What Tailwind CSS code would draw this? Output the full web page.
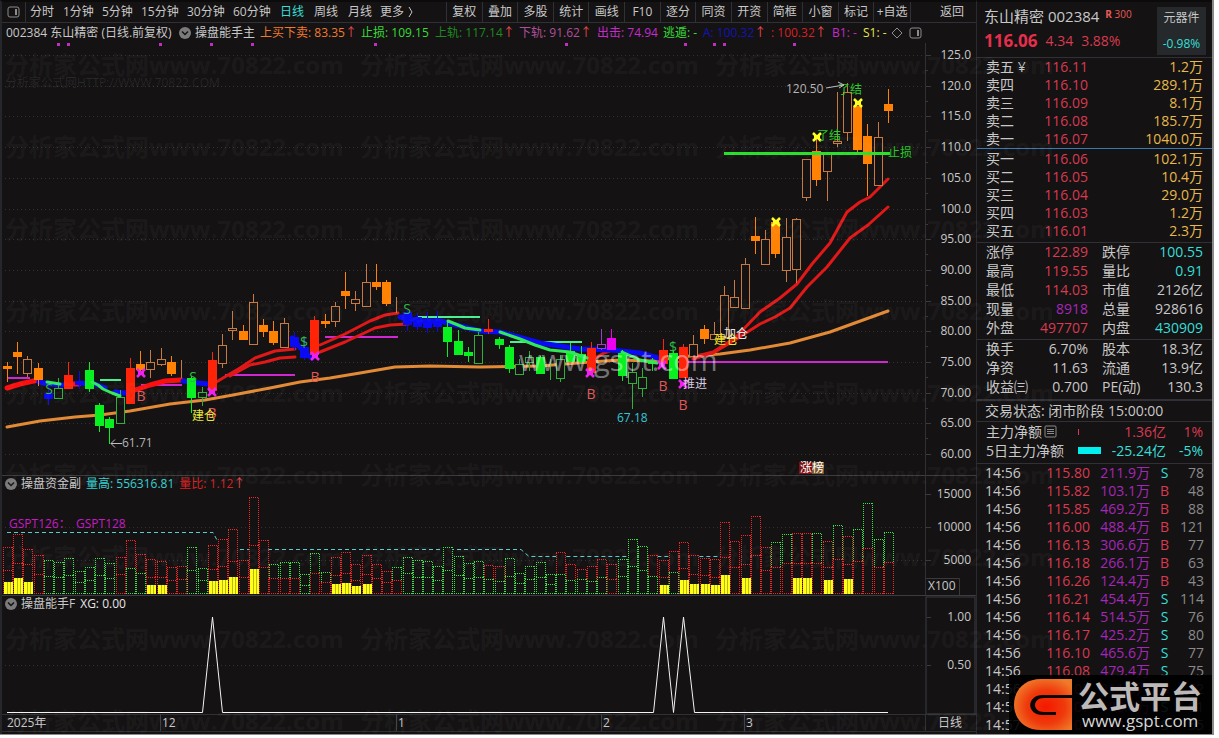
<!DOCTYPE html>
<html lang="zh-CN">
<head>
<meta charset="utf-8">
<meta name="viewport" content="width=device-width, initial-scale=1">
<title>东山精密 002384</title>
<script src="https://cdn.jsdelivr.net/npm/@tailwindcss/browser@4"></script>
</head>
<body class="bg-white font-['Open_Sans','Noto_Sans_CJK_SC',sans-serif] text-xs text-[#c8c8c8]">
<div class="relative mr-[5px] flex overflow-hidden border-r-2 border-b border-[#8a8a8a] bg-[#141213]">

  <main class="min-w-0 flex-1 border-t-2 border-l-2 border-t-[#0c0b0c] border-l-[#26272b]">
    <nav class="flex h-[21px] items-stretch overflow-hidden border-b border-[#303136] whitespace-nowrap" aria-label="周期">
      <button class="flex w-6 shrink-0 items-center justify-center border-r border-[#303136]" aria-label="侧栏">
        <svg width="13" height="12" viewBox="0 0 13 12" fill="none" stroke="#8c8c8c"><rect x="1" y="1" width="11" height="10" rx="2"/><path d="M8 3h2v6H8z" fill="#8c8c8c" stroke="none"/></svg>
      </button>
      <div class="flex flex-1 items-center pl-1">
        <button class="w-[33px] text-left">分时</button>
        <button class="w-[39px] text-left">1分钟</button>
        <button class="w-[39px] text-left">5分钟</button>
        <button class="w-[46px] text-left">15分钟</button>
        <button class="w-[46px] text-left">30分钟</button>
        <button class="w-[47px] text-left">60分钟</button>
        <button class="w-[34px] text-left text-[#35dfd8]">日线</button>
        <button class="w-[34px] text-left">周线</button>
        <button class="w-[32px] text-left">月线</button>
        <button class="flex items-center gap-1 text-left">更多 <svg width="6" height="12" viewBox="0 0 6 12" fill="none" stroke="#c8c8c8"><path d="M1 1l3 5-3 5"/></svg></button>
      </div>
      <div class="grid w-[465px] shrink-0 grid-cols-13 divide-x divide-[#303136] border-x border-[#303136]">
        <button>复权</button><button>叠加</button><button>多股</button><button>统计</button><button>画线</button><button>F10</button><button>逐分</button><button>同资</button><button>开资</button><button>简框</button><button>小窗</button><button>标记</button><button>+自选</button>
      </div>
      <button class="w-[65px] shrink-0 pr-3 text-right">返回</button>
    </nav>

    <div class="flex h-5 items-center overflow-hidden whitespace-nowrap">
      <span class="w-[172px] shrink-0 pl-1">002384 东山精密 (日线.前复权)</span>
      <button class="flex shrink-0 items-center gap-1 pl-[5px]"><svg width="12" height="12" viewBox="0 0 12 12"><circle cx="6" cy="6" r="6" fill="#7b7b7b"/><path d="M3 4.500l3 3 3-3" fill="none" stroke="#141213" stroke-width="1.500"/></svg>操盘能手主</button>
      <span class="ml-[5px] w-[101px] shrink-0 text-[#f07a2c]">上买下卖: 83.35<span class="text-[#ee4a4a]">↑</span></span>
      <span class="w-[74px] shrink-0 text-[#37dc37]">止损: 109.15</span>
      <span class="w-[84px] shrink-0 text-[#1f8a22]">上轨: 117.14<span class="text-[#ee4a4a]">↑</span></span>
      <span class="w-[78px] shrink-0 text-[#b0509a]">下轨: 91.62<span class="text-[#ee4a4a]">↑</span></span>
      <span class="w-[66px] shrink-0 text-[#c52bc9]">出击: 74.94</span>
      <span class="w-10 shrink-0 text-[#37dc37]">逃遁: -</span>
      <span class="w-[68px] shrink-0 text-[#1414b4]">A: 100.32<span class="text-[#ee4a4a]">↑</span></span>
      <span class="w-[61px] shrink-0 text-[#d92020]">: 100.32<span class="text-[#ee4a4a]">↑</span></span>
      <span class="w-[31px] shrink-0 text-[#c52bc9]">B1: -</span>
      <span class="w-[28px] shrink-0 text-[#e6e650]">S1: -</span>
      <svg class="shrink-0" width="32" height="12" viewBox="0 0 32 12" fill="none" stroke="#8c8c8c"><path d="M6 1l5 5-5 5-5-5z"/><rect x="19" y="1" width="11" height="10" rx="2"/><path d="M26 3h2v6h-2z" fill="#8c8c8c" stroke="none"/></svg>
    </div>
    <svg id="price" class="block h-auto w-full" viewBox="2 43 974 432" role="img" aria-label="日线K线图"></svg>

    <div class="flex h-[17px] items-center gap-[5px] border-t border-[#3c3c40] pl-[3px] whitespace-nowrap">
      <svg width="12" height="12" viewBox="0 0 12 12"><circle cx="6" cy="6" r="6" fill="#7b7b7b"/><path d="M3 4.500l3 3 3-3" fill="none" stroke="#141213" stroke-width="1.500"/></svg>
      <span class="-ml-px">操盘资金副</span><span class="text-[#35d0d0]">量高: 556316.81</span><span class="text-[#d92020]">量比: 1.12<span class="text-[#ee4a4a]">↑</span></span>
    </div>
    <svg id="volume" class="block h-auto w-full overflow-visible" viewBox="2 492 974 103" role="img" aria-label="成交量"></svg>

    <div class="flex h-[17px] items-center gap-[5px] border-t border-[#3c3c40] pl-[3px] whitespace-nowrap">
      <svg width="12" height="12" viewBox="0 0 12 12"><circle cx="6" cy="6" r="6" fill="#7b7b7b"/><path d="M3 4.500l3 3 3-3" fill="none" stroke="#141213" stroke-width="1.500"/></svg>
      <span class="-ml-px">操盘能手F</span><span class="text-[#e6e6e6]">XG: 0.00</span>
    </div>
    <svg id="signal" class="block h-auto w-full overflow-visible" viewBox="2 612 974 122" role="img" aria-label="选股信号"></svg>
  </main>

  <aside class="w-[236px] shrink-0 border-t-2 border-l border-t-[#0c0b0c] border-l-[#2b2b2f] text-sm leading-[18px]">
    <header class="flex h-14 justify-between border-b border-[#303136] pr-[6px] pl-[7px] whitespace-nowrap">
      <div>
        <h1 class="mt-[5px] flex items-start gap-[6px] text-[15px] leading-[18px]"><span>东山精密 002384</span><span class="text-[10px] leading-[14px] text-[#e85a55]"><b>R</b> 300</span></h1>
        <p class="mt-[7px] flex items-center gap-2 text-[#d83a50]"><b class="text-[17px] text-[#e62f4c]">116.06</b><span>4.34</span><span>3.88%</span></p>
      </div>
      <div class="mt-[5px] flex h-12 w-[49px] flex-col items-center justify-between bg-[#25292b] py-[3px] text-xs"><span>元器件</span><span class="text-[#35dfd8]">-0.98%</span></div>
    </header>
    <table class="w-full table-fixed border-b border-[#3a78b4] whitespace-nowrap"><tbody id="asks"></tbody></table>
    <table class="mt-px w-full table-fixed whitespace-nowrap"><tbody id="bids"></tbody></table>
    <table class="mt-[2px] w-full table-fixed border-t border-[#303136] whitespace-nowrap"><tbody id="stats"></tbody></table>
    <table class="mt-px w-full table-fixed border-t border-[#303136] whitespace-nowrap"><tbody id="funda"></tbody></table>
    <p class="mt-[3px] border-t-2 border-b border-[#303136] pl-2 leading-5">交易状态: 闭市阶段 15:00:00</p>
    <table class="mb-[3px] w-full table-fixed whitespace-nowrap">
      <tbody>
        <tr class="h-[19px]"><th class="w-[99px] p-0 pl-[9px] text-left font-normal" scope="row"><span class="flex items-center gap-[2px]">主力净额<svg width="13" height="13" viewBox="0 0 13 13" fill="none" stroke="#8c8c8c"><rect x="1" y="1" width="11" height="11" rx="1"/><path d="M3 4.500h7M3 6.500h7M3 8.500h7"/></svg></span></th><td class="w-[26px] p-0"><span class="ml-[2px] block h-[6px] w-px bg-[#d83a50]"></span></td><td class="w-[64px] p-0 text-right text-[#d83a50]">1.36亿</td><td class="p-0 pr-[9px] text-right text-[#d83a50]">1%</td></tr>
        <tr class="h-[19px]"><th class="p-0 pl-[9px] text-left font-normal" scope="row">5日主力净额</th><td class="p-0"><span class="ml-[2px] block h-[7px] w-[23px] bg-[#00f0f0]"></span></td><td class="p-0 text-right text-[#35dfd8]">-25.24亿</td><td class="p-0 pr-[9px] text-right text-[#35dfd8]">-5%</td></tr>
      </tbody>
    </table>
    <table class="w-full table-fixed border-t border-[#303136] whitespace-nowrap"><tbody id="ticks"></tbody></table>
  </aside>

  <svg id="marks" class="pointer-events-none absolute inset-0 h-full w-full" aria-hidden="true"></svg>

  <div class="absolute right-0 bottom-0 flex h-[59px] w-[203px] items-center gap-[6px] bg-black/90 pl-[5px]">
    <svg class="shrink-0" width="58" height="52" viewBox="0 0 58 52">
      <defs><radialGradient id="flame" cx=".55" cy=".55" r=".6"><stop offset="0" stop-color="#f41800"/><stop offset=".55" stop-color="#ef3a0c"/><stop offset="1" stop-color="#f07a2a"/></radialGradient></defs>
      <path d="M58 0v51H27C-9 51-9 0 27 0z" fill="url(#flame)"/>
      <path d="M58 16H29C12 16 12 36 29 36h13v-3H30c-12 0-12-14 0-14h28z" fill="#0a0606"/>
    </svg>
    <div class="whitespace-nowrap text-[#bdb9b9]"><b class="block text-[31px] leading-[32px]">公式平台</b><span class="block pl-1 text-[17px] leading-[18px] text-[#d6d6d6]">www.gspt.com</span></div>
  </div>
</div>

<script>
const $ = id => document.getElementById(id);
const X = i => Math.round(7 + 10.244 * i) + 0.5;
const line = (x1, y1, x2, y2, c, w = 1, extra = '') => `<line x1="${x1}" y1="${y1}" x2="${x2}" y2="${y2}" stroke="${c}" stroke-width="${w}" ${extra}/>`;
const text = (x, y, s, c, size = 12, extra = '') => `<text x="${x}" y="${y + Math.round(size * 0.36)}" fill="${c}" font-size="${size}" ${extra}>${s}</text>`;
const poly = (pts, c, w = 3) => `<polyline points="${pts}" fill="none" stroke="${c}" stroke-width="${w}" stroke-linejoin="round" stroke-linecap="round"/>`;
const dots = y => line(5, y + .5, 923, y + .5, '#333134', 1, 'stroke-dasharray="1 3"');

/* price chart: [kind, high, body top, body bottom, low] */
const K = {o:['#ff8205',1],h:['#c67a42',0],g:['#08f020',1],G:['#2fb03a',0],r:['#ff2408',1],b:['#0a0af5',1],m:['#f000f0',1],p:['#9a40c0',0]};
const candles = [
['o',362,366,369,382],['o',342,352,357,374],['h',356,359,373,377],['o',363,368,380,386],['b',380,393,399,405],['G',378,388,398,398],['r',362,375,389,389],['b',371,381,385,389],['g',362,370,389,392],['g',403,405,426,432],
['g',417,419,428,444],['G',390,397,423,423],['r',358,368,404,404],['o',351,364,370,374],['h',350,362,369,378],['h',348,359,364,366],['o',356,362,374,376],['h',360,377,377,378],['g',376,378,398,413],['G',387,392,397,406],
['r',352,360,391,391],['h',334,345,363,368],['h',311,328,330,340],['o',325,331,340,340],['h',294,302,344,344],['o',319,325,332,337],['o',321,331,343,345],['h',318,323,347,347],['b',332,337,347,350],['b',338,347,358,360],
['r',316,320,355,355],['o',314,321,324,328],['h',302,306,321,327],['o',272,291,296,309],['h',291,299,303,311],['h',264,282,306,306],['o',264,282,287,290],['o',280,282,304,306],['h',297,303,303,313],['b',310,312,325,331],
['b',313,317,327,330],['b',312,319,328,333],['b',311,319,327,332],['g',322,327,342,357],['g',330,341,355,355],['g',347,352,356,362],['G',332,335,363,363],['r',319,329,332,334],['g',337,339,345,349],['g',345,347,369,373],
['G',359,364,374,374],['G',351,357,362,371],['g',356,357,374,374],['G',359,374,374,380],['G',355,359,378,382],['g',343,351,362,362],['g',346,354,362,364],['r',342,348,373,373],['p',329,344,348,350],['m',329,338,350,350],
['g',350,353,376,381],['G',363,372,383,409],['G',368,377,388,397],['g',358,361,364,371],['r',339,350,364,364],['g',350,353,379,379],['r',344,347,378,378],['h',335,344,356,356],['o',325,329,339,344],['h',322,334,339,340],
['h',286,295,337,337],['h',280,297,307,307],['h',258,264,308,308],['o',217,236,241,254],['h',230,239,264,264],['o',222,222,254,258],['h',218,237,270,282],['h',218,219,269,283],['h',159,159,197,201],['o',137,151,180,186],
['h',153,153,171,201],['h',92,141,143,147],['h',83,92,132,141],['o',106,106,150,152],['o',124,136,164,196],['h',122,137,185,185],['o',89,104,111,123]];
let p = '';
['125.0','120.0','115.0','110.0','105.0','100.0','95.00','90.00','85.00','80.00','75.00','70.00','65.00','60.00'].forEach((t, i) => {
  const y = Math.round(55 + i * 30.7);
  p += dots(y) + line(925, y + .5, 931, y + .5, '#3a3a3e') + text(971, y, t, '#c8c8c8', 12, 'text-anchor="end"');
  if (i < 13) p += line(925, y + 15.5, 928, y + 15.5, '#3a3a3e');
});
p += line(925.5, 23, 925.5, 475, '#303136');
p += poly('7,427 40,421 75,417 100,415 130,411 170,404 205,400 233,395 270,388 300,382 330,378 360,373 395,367 430,366 480,367 540,366 590,362 620,360 650,361 690,356 720,354 750,350 790,343 830,332 888,311', '#e28a35');
[[7,30,378],[141,182,385],[225,295,375],[325,398,337],[670,888,362]].forEach(([a,b,y]) => p += line(a,y,b,y,'#d028d0',2));
[[100,121,380],[417,480,317],[510,582,342]].forEach(([a,b,y]) => p += line(a,y,b,y,'#48f090',2));
['7,388 20,384 38,380','69,384 79,384','135,390 150,385 165,381 181,380'].forEach(a => p += poly(a,'#fa1010',5));
['213,384 228,375 240,368 255,358 275,351 295,349','230,376 250,365 265,362 280,358 295,357','320,345 345,334 370,321 385,315 398,313','320,352 345,342 375,328 390,325 408,324','595,358 604,353 612,350','693,357 713,352 735,338 760,312 780,298 797,284 812,264 830,243 847,212 860,202 870,197 888,179','693,359 713,353 735,340 760,324 775,317 790,308 807,287 827,267 850,238 868,225 888,207'].forEach(a => p += poly(a,'#e01818'));
['39,382 50,384 62,385','79,383 95,384 105,388','115,392 125,393','183,381 198,383 208,384','292,338 298,345 306,354 312,358','400,317 420,321 440,321 460,326 480,331','480,331 500,332 540,343 580,349 612,350 640,353 662,359'].forEach(a => p += poly(a,'#0a0af5',5));
candles.forEach(([k, h, t, b, l], i) => {
  const [c, solid] = K[k], x = X(i);
  if (h < t) p += line(x, h, x, t, c);
  if (l > b) p += line(x, b, x, l, c);
  p += solid ? `<rect x="${x - 4.5}" y="${t}" width="9" height="${Math.max(b - t, 2)}" fill="${c}"/>`
             : `<rect x="${x - 4}" y="${t + .5}" width="8" height="${b - t}" fill="${t === b ? c : '#141213'}" stroke="${c}"/>`;
});
['47,382 60,384','92,382 98,385 103,389 112,393 120,396','448,321 458,325 465,328 480,330','500,332 520,339 535,345 550,350 570,352 587,358','622,352 640,360 657,363'].forEach(a => p += poly(a,'#30e858'));
p += line(724, 153.5, 890, 153.5, '#28e028', 3);
const cross = (x, y, c) => `<path d="M${x-4} ${y-4}l8 8M${x+4} ${y-4}l-8 8M${x-3} ${y}h6" stroke="${c}" stroke-width="2.500"/>`;
[[776,222],[817,137],[858,103]].forEach(([x,y]) => p += cross(x,y,'#ffff20'));
[[141,373],[212,392],[315,356],[590,373],[662,365],[683,384]].forEach(([x,y]) => p += cross(x,y,'#f020f0'));
[58,68,160,211,252,375,566,685,714,724,794].forEach(x => p += `<rect x="${x-1}" y="43" width="3" height="3" fill="#c030c0"/>`);
[[141,396],[212,413],[315,377],[591,394],[663,386],[683,405]].forEach(([x,y]) => p += text(x,y,'B','#e05858',14,'text-anchor="middle"'));
[[49,389,'S'],[193,377,'S'],[304,342,'$'],[407,309,'S'],[673,347,'$']].forEach(([x,y,s]) => p += text(x,y,s,'#30b848',14,'text-anchor="middle"'));
p += text(192,416,'建仓','#e8e838') + text(714,340,'建仓','#f0e828') + text(724,334,'加仓','#e8e8e8') + text(817,136,'了结','#28d028') + text(838,90,'了结','#28d028') + text(888,153,'止损','#20c820') + text(683,384,'推进','#d8c8e0') + text(122,443,'61.71','#b4b4b4') + text(786,89,'120.50','#b4b4b4') + text(617,418,'67.18','#35c8d8');
p += `<path d="M122 443.500H111m4-4l-4 4 4 4M826 88l18-3m-6-3l6 3-5 3" fill="none" stroke="#c0c0c0"/>`;
p += `<rect x="799" y="462" width="13" height="12" fill="#7a1010"/><rect x="812" y="462" width="12" height="12" fill="#7a5428"/>` + text(800,468,'涨榜','#ffffff');
p += text(519,361,'www.gspt.com','#ffffff',29,'fill-opacity=".42"');
$('price').innerHTML = p;

/* volume: outer top, upper colour, split, lower colour, top of yellow fill */
const vols = `547r570r582 534r563r578 549r564r582 555r574r 560g576g 562g577g 558g575g 571g582g 567g580g 558g575g 563g578g 557r574r 540r568g 554r573g 559r577r585 561r577r585 567r580r 566r579r 547g570g 568g580g 545r569r581 539r566r580 529r561r577 560r577r 497r545r569 540r567r 564g578r 562g578r 562g578r 574g585g 553g573r 572g582r 557r575r584 552r573r583 564r580r586 555r574r584 564r578r 571r582r 567g580r 557g573g 560g577g 561g577g 566g580g 547g570g 556g575g 563g578g 561g577g 565r579g 566r581g 558g576g 573g583g 566g579g 562g577g 574g584g 552r574g 564r580g 569r579g 566r581g 559r577g 564r579r 559g576g 539g566g 546g570g 555r576g 560r577r585 551r572g 542r568r580 555r574r584 558r575r584 559r577r585 522r557r575 541r567r 535r564r578 516r555r 547r570r 542g567r 534g563r 533r563r578 533r563r578 533g563r 541r567r580 525g559r 536r564r579 529g561r 503g548r 539g567r 532g562r`.split(' ');
let v = dots(527) + dots(560);
v += `<path d="M7 532.500H213L217 540M240 549.500H521L529 556.500H880" fill="none" stroke="#58cccc" stroke-dasharray="4 3"/>`;
const vc = {r:'#f02828', g:'#3ee04a'};
vols.forEach((s, i) => {
  const [, t, c, m, d, y] = s.match(/(\d+)(\w)(\d+)([rg])(\d*)/), x = X(i);
  const box = (top, bottom, col) => `<path d="M${x-4} ${bottom}V${top}M${x+5} ${bottom}V${top}M${x-4.5} ${+top+.5}h10" fill="none" stroke="${col}" stroke-dasharray="1 1"/>`;
  v += `<rect x="${x-4}" y="${t}" width="9" height="${594-t}" fill="#141213"/>` + box(t, m, vc[c]) + box(m, 594, vc[d]);
  v += `<path d="M${x-4.5} 593.500h10" stroke="${vc[d]}" stroke-dasharray="1 1"/>`;
  if (y) v += `<rect x="${x-3.5}" y="${y}" width="9" height="${594-y}" fill="#ffff18"/><path d="M${x} ${y}V594M${x+3} ${y}V594" stroke="#b8b810"/>`;
});
v += text(9,524,'GSPT126：','#c41cc4') + text(76,524,'GSPT128','#c41cc4');
v += line(925.5, 475, 925.5, 595, '#303136');
[['15000',494],['10000',527],['5000',560]].forEach(([t,y]) => v += line(925,y+.5,931,y+.5,'#3a3a3e') + text(971,y,t,'#c8c8c8',12,'text-anchor="end"'));
v += `<path d="M926 578.500H959.500V595" fill="none" stroke="#3a3a3e"/>` + text(928,586,'X100','#c8c8c8');
$('volume').innerHTML = v;

/* signal and time axis */
let s = dots(665) + `<path d="M7 712.500H202.500L212.500 617 222.500 712.500H653.500L663.500 617 673.500 712.500 683.500 617 694.500 712.500H888" fill="none" stroke="#f4f4f4"/>`;
s += `<rect x="926" y="597" width="49" height="117" fill="none" stroke="#3a3b42"/>` + line(927,617.5,931,617.5,'#3a3a3e') + line(927,665.5,931,665.5,'#3a3a3e');
s += text(971,617,'1.00','#c8c8c8',12,'text-anchor="end"') + text(971,665,'0.50','#c8c8c8',12,'text-anchor="end"');
s += line(2,714.5,976,714.5,'#303136') + line(2,731.5,976,731.5,'#303136') + line(925.5,714,925.5,731,'#303136');
[160,396,601,744].forEach(x => s += line(x+.5,714,x+.5,731,'#3c3c42'));
s += text(7,723,'2025年','#c8c8c8') + text(162,723,'12','#c8c8c8') + text(398,723,'1','#c8c8c8') + text(603,723,'2','#c8c8c8') + text(746,723,'3','#c8c8c8') + text(938,723,'日线','#c8c8c8');
$('signal').innerHTML = s;

/* repeated site mark */
let w = text(5,83,'分析家公式网HTTP://WWW.70822.COM','#ffffff',12,'fill-opacity=".09"');
for (let r = 0; r < 9; r++) for (let c = 0; c < 3; c++) w += text(5 + c * 355, 65 + r * 82, '分析家公式网www.70822.com', '#ffffff', 24, 'fill-opacity=".05" font-weight="700"');
$('marks').innerHTML = w;

/* quote panel */
const book = rows => rows.map(([n, a, q]) => `<tr class="h-[18px]"><th scope="row" class="w-[58px] p-0 pl-[9px] text-left font-normal">${n}</th><td class="w-[53px] p-0 text-right text-[#d83a50]">${a}</td><td class="p-0 pr-[9px] text-right text-[#e8b84c]">${q}</td></tr>`).join('');
$('asks').innerHTML = book([['卖五 ¥','116.11','1.2万'],['卖四','116.10','289.1万'],['卖三','116.09','8.1万'],['卖二','116.08','185.7万'],['卖一','116.07','1040.0万']]);
$('bids').innerHTML = book([['买一','116.06','102.1万'],['买二','116.05','10.4万'],['买三','116.04','29.0万'],['买四','116.03','1.2万'],['买五','116.01','2.3万']]);
const tone = {r:'text-[#d83a50]', c:'text-[#35dfd8]', m:'text-[#a428b8]', w:'text-[#c8c8c8]'};
const pairs = rows => rows.map(([a, b, bc, c, d, dc]) => `<tr class="h-[19px]"><th scope="row" class="w-[52px] p-0 pl-[9px] text-left font-normal">${a}</th><td class="w-[59px] p-0 text-right ${tone[bc]}">${b}</td><th scope="row" class="w-[60px] p-0 pl-[14px] text-left font-normal">${c}</th><td class="p-0 pr-[9px] text-right ${tone[dc]}">${d}</td></tr>`).join('');
$('stats').innerHTML = pairs([['涨停','122.89','r','跌停','100.55','c'],['最高','119.55','r','量比','0.91','c'],['最低','114.03','r','市值','2126亿','w'],['现量','8918','m','总量','928616','w'],['外盘','497707','r','内盘','430909','c']]);
$('funda').innerHTML = pairs([['换手','6.70%','w','股本','18.3亿','w'],['净资','11.63','w','流通','13.9亿','w'],['收益㈢','0.700','w','PE(动)','130.3','w']]);
const T = [['115.80','211.9','S',78],['115.82','103.1','B',48],['115.85','469.2','B',88],['116.00','488.4','B',121],['116.13','306.6','B',77],['116.18','266.1','B',63],['116.26','124.4','B',43],['116.21','454.4','S',114],['116.14','514.5','S',76],['116.17','425.2','S',80],['116.10','465.6','S',77],['116.08','479.4','S',75],['116.08','211.3','B',52],['116.07','188.6','S',61],['116.07','240.2','S',55]];
$('ticks').innerHTML = T.map(([a, q, d, n], i) => `<tr class="h-[18px]"><td class="w-[53px] p-0 pl-2">${i === 14 ? '14:57' : '14:56'}</td><td class="w-[60px] p-0 text-right text-[#d83a50]">${a}</td><td class="w-[60px] p-0 text-right text-[#a428b8]">${q}万</td><td class="w-[29px] p-0 text-center ${d === 'S' ? tone.c : tone.r}">${d}</td><td class="p-0 pr-2 text-right text-[#8a8a8a]">${n}</td></tr>`).join('');
</script>
</body>
</html>
